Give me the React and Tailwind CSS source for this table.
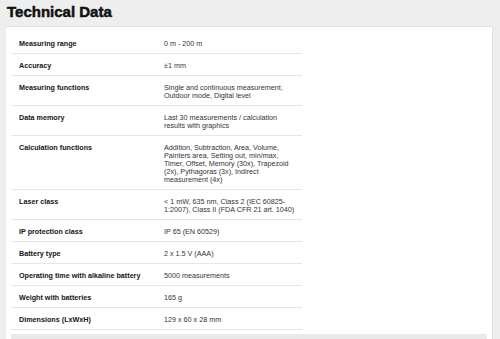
const specs = [
  ['Measuring range', ['0 m - 200 m']],
  ['Accuracy', ['±1 mm']],
  ['Measuring functions', ['Single and continuous measurement,', 'Outdoor mode, Digital level']],
  ['Data memory', ['Last 30 measurements / calculation', 'results with graphics']],
  [
    'Calculation functions',
    [
      'Addition, Subtraction, Area, Volume,',
      'Painters area, Setting out, min/max,',
      'Timer, Offset, Memory (30x), Trapezoid',
      '(2x), Pythagoras (3x), Indirect',
      'measurement (4x)',
    ],
  ],
  ['Laser class', ['< 1 mW, 635 nm, Class 2 (IEC 60825-', '1:2007), Class II (FDA CFR 21 art. 1040)']],
  ['IP protection class', ['IP 65 (EN 60529)']],
  ['Battery type', ['2 x 1.5 V (AAA)']],
  ['Operating time with alkaline battery', ['5000 measurements']],
  ['Weight with batteries', ['165 g']],
  ['Dimensions (LxWxH)', ['129 x 60 x 28 mm']],
];

function SpecRow({ label, lines }) {
  return (
    <div className="flex border-b border-[#e6e6e6] pt-[8px] pb-[5px] text-[7.2px] leading-[8px]">
      <div className="w-[153px] shrink-0 pl-2 font-bold text-[#141414]">{label}</div>
      <div className="flex-1 text-[#333333]">
        {lines.map((l) => (
          <div key={l} className="whitespace-nowrap">{l}</div>
        ))}
      </div>
    </div>
  );
}

export default function App() {
  return (
    <div className="w-[500px] h-[339px] overflow-hidden bg-[#eeeeee] font-['Liberation_Sans',Arial,sans-serif]">
      <h1 className="pl-[7px] pt-[3px] h-[26px] text-[15px] leading-[18px] font-bold text-[#111] [-webkit-text-stroke:0.5px_#111]">
        Technical Data
      </h1>
      <section className="ml-[6px] mr-[7px] bg-white border-t border-r border-[#e2e2e2] px-[5px] pt-[5px] pb-[4px]">
        <div className="w-[291px]">
          {specs.map(([label, lines]) => (
            <SpecRow key={label} label={label} lines={lines} />
          ))}
        </div>
        <div className="mt-[4px] h-[20px] bg-[#e9e9e9]" />
      </section>
    </div>
  );
}
